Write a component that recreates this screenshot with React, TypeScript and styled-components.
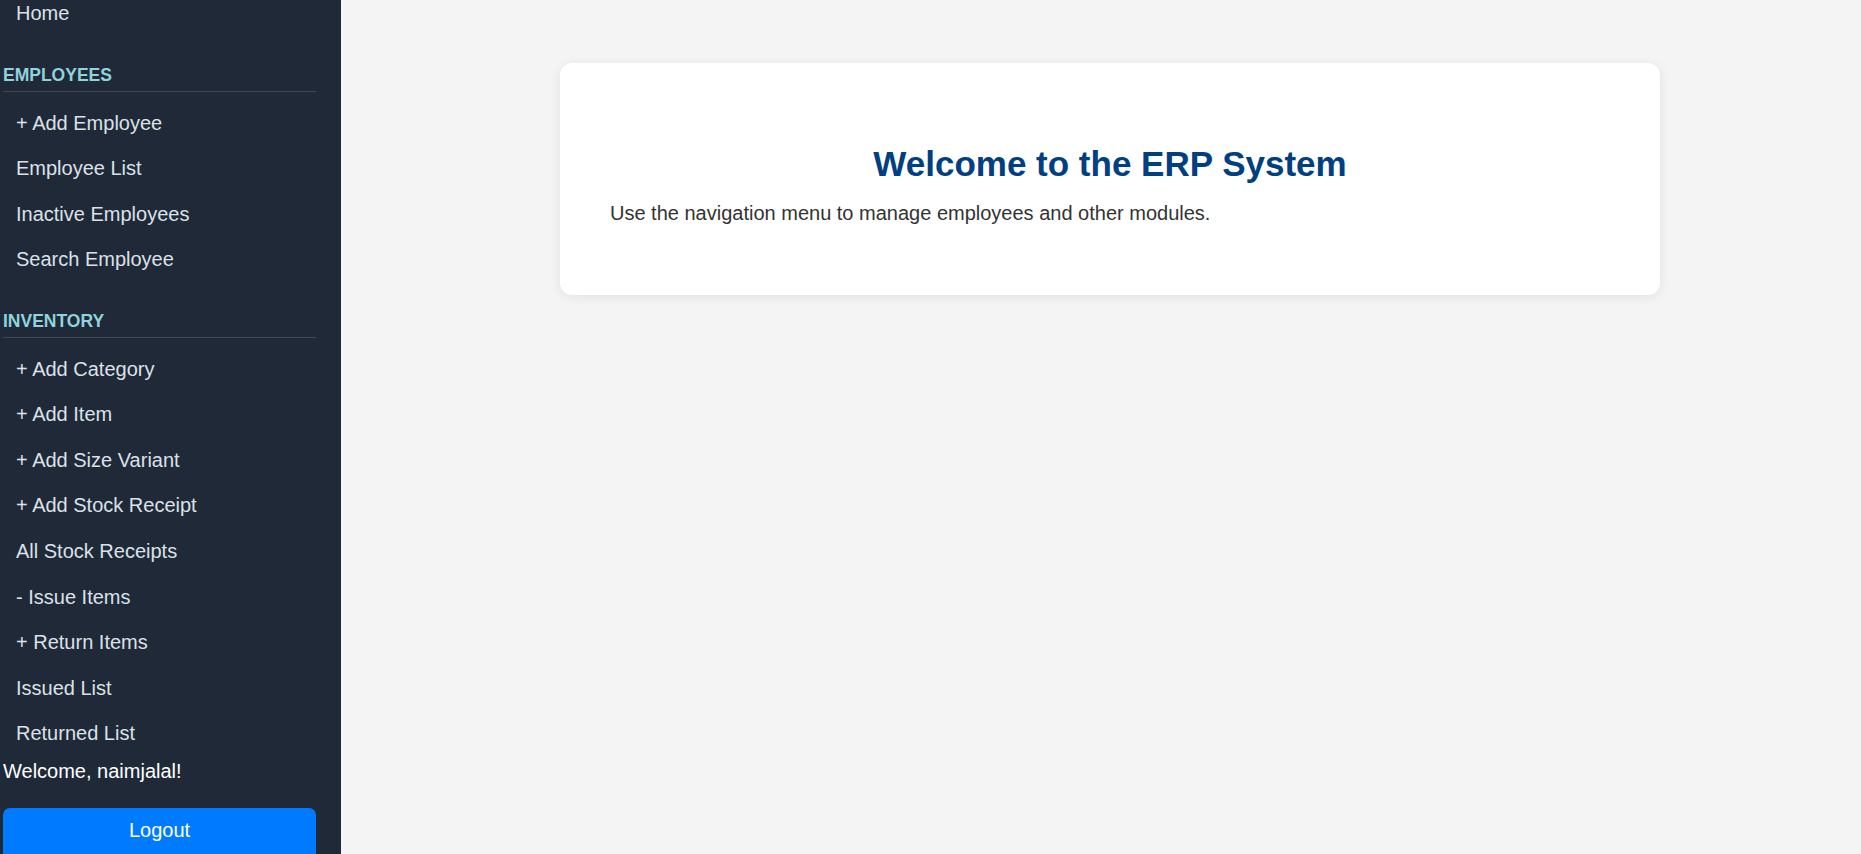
import React from "react";
import styled, { createGlobalStyle } from "styled-components";

const GlobalStyle = createGlobalStyle`
  html, body {
    margin: 0;
    padding: 0;
    height: 100%;
  }
  body {
    font-family: "Liberation Sans", Arial, sans-serif;
    background: #f4f4f4;
  }
  * {
    box-sizing: border-box;
  }
`;

type Section = { title: string; links: string[] };

const sections: Section[] = [
  {
    title: "Employees",
    links: ["+ Add Employee", "Employee List", "Inactive Employees", "Search Employee"],
  },
  {
    title: "Inventory",
    links: [
      "+ Add Category",
      "+ Add Item",
      "+ Add Size Variant",
      "+ Add Stock Receipt",
      "All Stock Receipts",
      "- Issue Items",
      "+ Return Items",
      "Issued List",
      "Returned List",
    ],
  },
];

export default function App() {
  return (
    <>
      <GlobalStyle />
      <Layout>
        <Sidebar>
          <Nav>
            <NavLink href="#">Home</NavLink>
            {sections.map((s) => (
              <NavSection key={s.title}>
                <SectionTitle>{s.title}</SectionTitle>
                {s.links.map((l) => (
                  <NavLink key={l} href="#">
                    {l}
                  </NavLink>
                ))}
              </NavSection>
            ))}
          </Nav>
          <SidebarFooter>
            <Greeting>Welcome, naimjalal!</Greeting>
            <LogoutButton type="button">Logout</LogoutButton>
          </SidebarFooter>
        </Sidebar>
        <Main>
          <Card>
            <Title>Welcome to the ERP System</Title>
            <Lead>Use the navigation menu to manage employees and other modules.</Lead>
          </Card>
        </Main>
      </Layout>
    </>
  );
}

const Layout = styled.div`
  display: flex;
  height: 100vh;
  overflow: hidden;
`;

const Sidebar = styled.aside`
  width: 341px;
  flex-shrink: 0;
  display: flex;
  flex-direction: column;
  background: #1f2937;
  padding: 0 25px 0 3px;
`;

const Nav = styled.nav`
  flex: 1;
  min-height: 0;
  overflow: hidden;
  display: flex;
  flex-direction: column;
  justify-content: flex-end;
`;

const NavSection = styled.div`
  display: flex;
  flex-direction: column;
  margin-top: 28.5px;
`;

const SectionTitle = styled.h4`
  margin: 0 0 8.5px;
  padding-bottom: 6px;
  border-bottom: 1px solid #3f4752;
  color: #8fd3de;
  font-size: 17.5px;
  line-height: 20px;
  font-weight: 700;
  text-transform: uppercase;
`;

const NavLink = styled.a`
  flex-shrink: 0;
  display: block;
  padding: 11.27px 13px;
  color: #dbe1e8;
  font-size: 20px;
  line-height: 23px;
  text-decoration: none;
`;

const SidebarFooter = styled.div`
  flex-shrink: 0;
  padding-top: 4px;
  display: flex;
  flex-direction: column;
`;

const Greeting = styled.div`
  color: #ffffff;
  font-size: 20px;
  line-height: 23px;
  margin-bottom: 24.3px;
`;

const LogoutButton = styled.button`
  height: 46.3px;
  width: 100%;
  border: none;
  border-radius: 7px 7px 0 0;
  background: #007bff;
  color: #ffffff;
  font-family: inherit;
  font-size: 20px;
  cursor: pointer;
`;

const Main = styled.main`
  flex: 1;
  padding: 62.7px 201px 0 219px;
  background: #f4f4f4;
`;

const Card = styled.section`
  background: #ffffff;
  border-radius: 12px;
  padding: 44px 50px;
  box-shadow: 0 2px 12px rgba(0, 0, 0, 0.08);
`;

const Title = styled.h2`
  margin: 36.5px 0 17.6px;
  color: #004080;
  font-size: 35px;
  line-height: 41.4px;
  font-weight: 700;
  text-align: center;
`;

const Lead = styled.p`
  margin: 0 0 25.8px;
  color: #333333;
  font-size: 20px;
  line-height: 23px;
`;
